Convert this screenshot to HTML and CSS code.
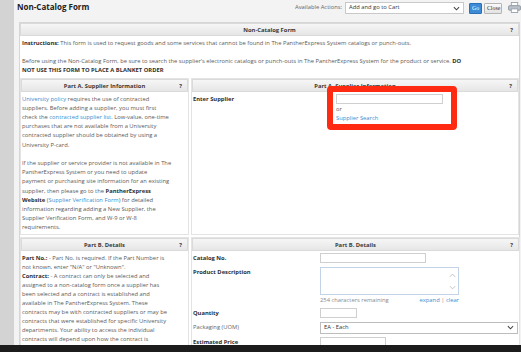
FILE: index.html
```html
<!DOCTYPE html>
<html lang="en">
<head>
  <meta charset="UTF-8">
  <title>Non-Catalog Form</title>
  <link rel="stylesheet" href="styles.css">
</head>
<body>
  <div class="screen">
    <div class="strip"></div>
    <div class="page">
      <div class="topbar">
        <h1>Non-Catalog Form</h1>
        <div class="actions">
          <span class="actions-label">Available Actions:</span>
          <div class="select wide">Add and go to Cart
            <svg class="chev" viewBox="0 0 8 5" width="7" height="5"><path d="M1 1l3 3 3-3" fill="none" stroke="#444" stroke-width="1.2"/></svg>
          </div>
          <button class="go">Go</button>
          <button class="close">Close</button>
          <svg class="printer" viewBox="0 0 14 12" width="13" height="11">
            <rect x="3.5" y="0.5" width="7" height="4" fill="#fff" stroke="#9aa3ad"/>
            <rect x="0.5" y="4" width="13" height="5" rx="1" fill="#b9c0c8" stroke="#8e98a3"/>
            <rect x="3.5" y="7.5" width="7" height="4" fill="#fff" stroke="#9aa3ad"/>
          </svg>
        </div>
      </div>

      <div class="form">
        <div class="bar">Non-Catalog Form<span class="help">?</span></div>
        <div class="intro">
          <p><b>Instructions:</b> This form is used to request goods and some services that cannot be found in The PantherExpress System catalogs or punch-outs.</p>
          <p>Before using the Non-Catalog Form, be sure to search the supplier's electronic catalogs or punch-outs in The PantherExpress System for the product or service. <b>DO<br>NOT USE THIS FORM TO PLACE A BLANKET ORDER</b></p>
        </div>

        <div class="section">
          <div class="side">
            <div class="bar">Part A. Supplier Information<span class="help">?</span></div>
            <div class="side-text">
              <p><a href="#">University policy</a> requires the use of contracted<br>
              suppliers. Before adding a supplier, you must first<br>
              check the <a href="#">contracted supplier list</a>. Low-value, one-time<br>
              purchases that are not available from a University<br>
              contracted supplier should be obtained by using a<br>
              University P-card.</p>
              <p>If the supplier or service provider is not available in The<br>
              PantherExpress System or you need to update<br>
              payment or purchasing site information for an existing<br>
              supplier, then please go to the <b>PantherExpress<br>
              Website</b> (<a href="#">Supplier Verification Form</a>) for detailed<br>
              information regarding adding a New Supplier, the<br>
              Supplier Verification Form, and W-9 or W-8<br>
              requirements.</p>
            </div>
          </div>
          <div class="main">
            <div class="bar">Part A. Supplier Information<span class="help">?</span></div>
            <div class="supplier">
              <label class="label">Enter Supplier</label>
              <div class="supplier-pick">
                <div class="input supplier-input"></div>
                <div class="or">or</div>
                <a href="#">Supplier Search</a>
                <div class="highlight"></div>
              </div>
            </div>
          </div>
        </div>

        <div class="section">
          <div class="side">
            <div class="bar">Part B. Details<span class="help">?</span></div>
            <div class="side-text tight">
              <b>Part No.:</b> - Part No. is required. If the Part Number is<br>
              not known, enter "N/A" or "Unknown".<br>
              <b>Contract:</b> - A contract can only be selected and<br>
              assigned to a non-catalog form once a supplier has<br>
              been selected and a contract is established and<br>
              available in The PantherExpress System. These<br>
              contracts may be with contracted suppliers or may be<br>
              contracts that were established for specific University<br>
              departments. Your ability to access the individual<br>
              contracts will depend upon how the contract is<br>
              configured in The PantherExpress System.
            </div>
          </div>
          <div class="main">
            <div class="bar">Part B. Details<span class="help">?</span></div>
            <div class="details">
              <label class="label">Catalog No.</label>
              <div class="input catalog"></div>

              <label class="label">Product Description</label>
              <div>
                <div class="textarea">
                  <div class="arrows">
                    <svg viewBox="0 0 8 5" width="7" height="5"><path d="M1 4l3-3 3 3" fill="none" stroke="#bbb" stroke-width="1"/></svg>
                    <svg viewBox="0 0 8 5" width="7" height="5"><path d="M1 1l3 3 3-3" fill="none" stroke="#bbb" stroke-width="1"/></svg>
                  </div>
                </div>
                <div class="remaining">
                  <span>254 characters remaining</span>
                  <span><a href="#">expand</a> | <a href="#">clear</a></span>
                </div>
              </div>

              <label class="label">Quantity</label>
              <div class="input qty"></div>

              <label class="label plain">Packaging (UOM)</label>
              <div class="select uom">EA - Each
                <svg class="chev" viewBox="0 0 8 5" width="7" height="5"><path d="M1 1l3 3 3-3" fill="none" stroke="#444" stroke-width="1.2"/></svg>
              </div>

              <label class="label">Estimated Price</label>
              <div class="input price"></div>
            </div>
          </div>
        </div>
      </div>
    </div>
  </div>
  <div class="band"></div>
</body>
</html>
```

FILE: styles.css
```css
* {
  box-sizing: border-box;
}
body {
  margin: 0;
  width: 521px;
  height: 352px;
  overflow: hidden;
  font-family: "Open Sans", "Noto Sans", sans-serif;
  font-size: 5.8px;
  line-height: 9.2px;
  color: #5a5a5a;
  background: #1c1c1c;
}
p {
  margin: 0;
}
a {
  color: #3a8dd0;
  text-decoration: none;
}
b {
  color: #2e2e2e;
}
.screen {
  display: flex;
  height: 345px;
  overflow: hidden;
}
.strip {
  width: 14px;
  background: #d3d3d3;
}
.page {
  flex: 1;
  background: #f3f3f3;
  padding-left: 5px;
  overflow: hidden;
}
.topbar {
  display: flex;
  justify-content: space-between;
  align-items: flex-start;
  height: 22px;
}
h1 {
  margin: 2px 0 0 -2px;
  font-size: 8px;
  line-height: 10px;
  font-weight: bold;
  color: #222;
}
.actions {
  display: flex;
  align-items: center;
  gap: 2px;
  margin-top: 2px;
}
.actions-label {
  margin-right: 1px;
  color: #666;
}
.select {
  display: flex;
  align-items: center;
  justify-content: space-between;
  height: 12px;
  padding: 0 3px;
  background: #fff;
  border: 1px solid #c9c9c9;
  color: #333;
}
.select.wide {
  width: 119px;
}
.go,
.close {
  height: 11px;
  padding: 0 2px;
  font-family: "Liberation Serif", serif;
  font-size: 5.8px;
  border-radius: 1px;
}
.go {
  width: 13px;
  margin-left: 3px;
  background: #3d8ad6;
  border: 1px solid #2b6fb5;
  color: #fff;
}
.close {
  width: 18px;
  background: linear-gradient(#fafafa, #e2e2e2);
  border: 1px solid #b5b5b5;
  color: #333;
}
.printer {
  margin-left: 4px;
  margin-top: -2px;
}
.form {
  background: #fff;
  border: 1px solid #d6d6d6;
  margin-right: 1px;
}
.bar {
  position: relative;
  height: 13px;
  line-height: 12px;
  text-align: center;
  font-weight: bold;
  color: #3a3a3a;
  background: linear-gradient(#f6f6f6, #e6e6e6);
  border: 1px solid #dadada;
}
.help {
  position: absolute;
  right: 5px;
  top: 0;
}
.intro {
  padding: 3px 2px 0;
}
.intro p + p {
  margin-top: 9px;
}
.section {
  display: grid;
  grid-template-columns: 169px 1fr;
  gap: 2px;
  margin-top: 2px;
}
.side,
.main {
  border: 1px solid #e4e4e4;
}
.side-text {
  padding: 3px 1px 1px 1px;
  white-space: nowrap;
}
.side-text p + p {
  margin-top: 9.2px;
}
.side-text.tight {
  line-height: 9px;
}
.label {
  font-weight: bold;
  color: #2e2e2e;
}
.label.plain {
  font-weight: normal;
  color: #666;
}
.supplier {
  display: grid;
  grid-template-columns: 143px 1fr;
  padding: 3px 1px;
}
.supplier-pick {
  position: relative;
  margin-top: -1px;
}
.input {
  height: 10px;
  background: #fff;
  border: 1px solid #cfcfcf;
}
.supplier-input {
  width: 107px;
}
.or {
  line-height: 9px;
  margin-top: 1px;
}
.highlight {
  position: absolute;
  left: -9px;
  top: -8px;
  width: 130px;
  height: 44px;
  border: 6px solid #ff2a12;
  border-radius: 4px;
}
.details {
  display: grid;
  grid-template-columns: 127px 1fr;
  align-items: start;
  row-gap: 3px;
  padding: 2px 1px;
}
.details .label {
  line-height: 11px;
}
.catalog {
  width: 106px;
}
.textarea {
  display: flex;
  justify-content: flex-end;
  width: 139px;
  height: 28px;
  border: 1px solid #c3d3e6;
  background: #fff;
}
.arrows {
  display: flex;
  flex-direction: column;
  justify-content: space-between;
  padding: 5px 2px 4px;
}
.remaining {
  display: flex;
  justify-content: space-between;
  width: 139px;
  color: #888;
  margin-top: 1px;
  line-height: 9px;
}
.qty {
  width: 37px;
}
.uom {
  width: 198px;
  height: 12px;
  border-color: #bdbdbd;
}
.price {
  width: 66px;
}
.band {
  height: 7px;
  background: #1c1c1c;
}
```
